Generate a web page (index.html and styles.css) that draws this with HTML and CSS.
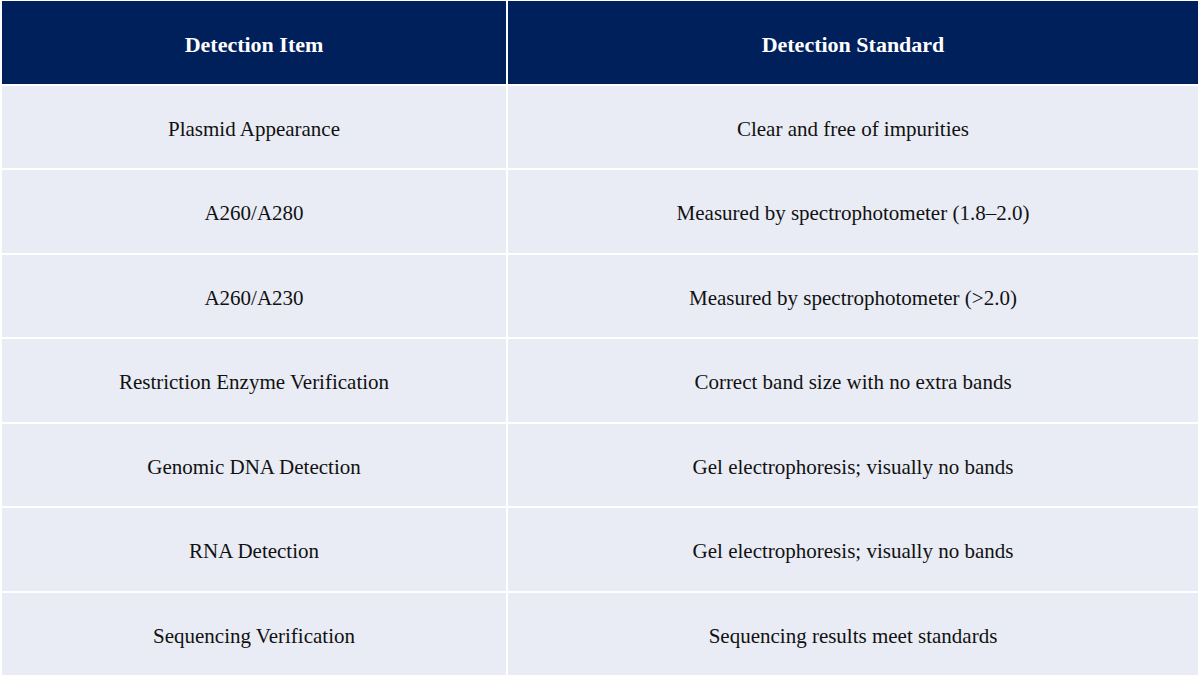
FILE: index.html
```html
<!DOCTYPE html>
<html lang="en">
<head>
<meta charset="utf-8">
<title>Plasmid Detection</title>
<link rel="stylesheet" href="styles.css">
</head>
<body>
<div class="table">
  <div class="cell head">Detection Item</div>
  <div class="cell head">Detection Standard</div>
  <div class="cell">Plasmid Appearance</div>
  <div class="cell">Clear and free of impurities</div>
  <div class="cell">A260/A280</div>
  <div class="cell">Measured by spectrophotometer (1.8–2.0)</div>
  <div class="cell">A260/A230</div>
  <div class="cell">Measured by spectrophotometer (&gt;2.0)</div>
  <div class="cell">Restriction Enzyme Verification</div>
  <div class="cell">Correct band size with no extra bands</div>
  <div class="cell">Genomic DNA Detection</div>
  <div class="cell">Gel electrophoresis; visually no bands</div>
  <div class="cell">RNA Detection</div>
  <div class="cell">Gel electrophoresis; visually no bands</div>
  <div class="cell">Sequencing Verification</div>
  <div class="cell">Sequencing results meet standards</div>
</div>
</body>
</html>
```
FILE: styles.css
```css
html, body {
  margin: 0;
  padding: 0;
  background: #ffffff;
}
body {
  width: 1200px;
  height: 676px;
  padding: 1px 2px 1px 2px;
  box-sizing: border-box;
  font-family: "Liberation Serif", "Times New Roman", serif;
}
.table {
  display: grid;
  grid-template-columns: 504px 1fr;
  grid-template-rows: repeat(8, 1fr);
  gap: 2px;
  height: 674px;
}
.cell {
  display: flex;
  align-items: center;
  justify-content: center;
  padding-top: 5px;
  box-sizing: border-box;
  background: #e9ecf5;
  color: #111111;
  font-size: 21px;
}
.head {
  background: #00205c;
  color: #ffffff;
  font-weight: bold;
  font-size: 22px;
}
```
